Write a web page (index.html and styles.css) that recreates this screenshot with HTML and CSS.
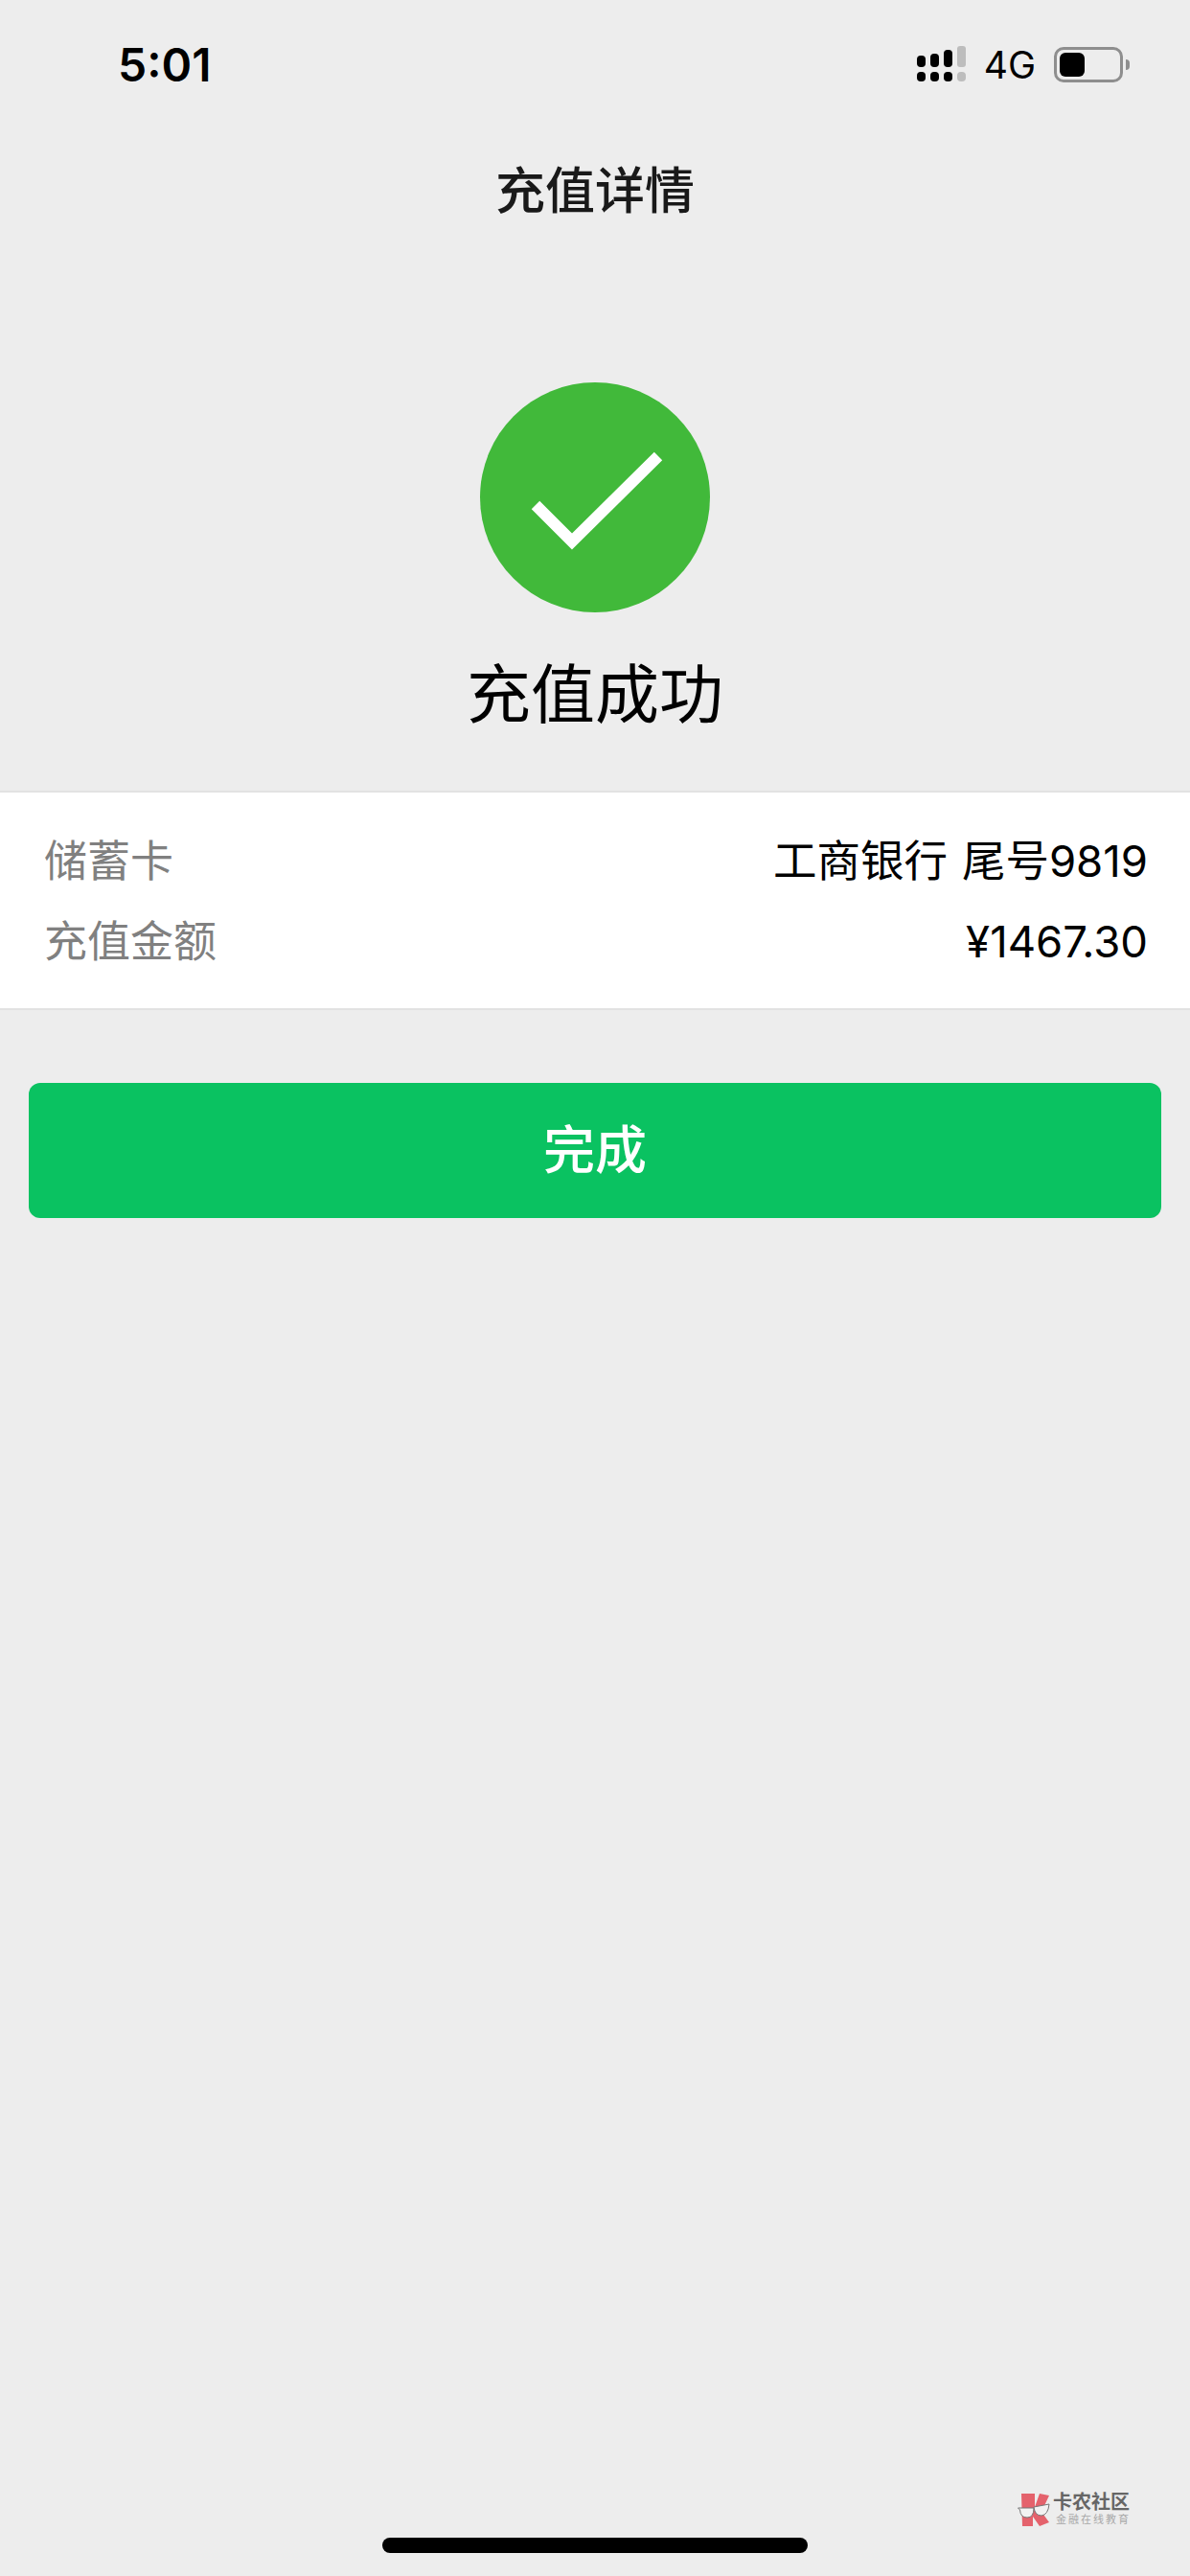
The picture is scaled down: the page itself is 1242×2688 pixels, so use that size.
FILE: index.html
```html
<html lang="zh-CN">
<head>
    <meta charset="UTF-8">
    <title>充值详情</title>
    <link rel="stylesheet" href="styles.css">
</head>
<body>

<div class="statusbar">
    <span class="time">5:01</span>
    <div class="status-icons">
        <svg class="signal" width="52" height="38" viewBox="0 0 52 38">
            <rect x="0" y="10" width="9" height="12" rx="4" fill="#000000"/>
            <rect x="14" y="8" width="9" height="14" rx="4" fill="#000000"/>
            <rect x="28" y="4" width="9" height="18" rx="4" fill="#000000"/>
            <rect x="42" y="0" width="9" height="22" rx="3" fill="#BDBDBD"/>
            <rect x="0" y="27" width="9" height="10" rx="4" fill="#000000"/>
            <rect x="14" y="27" width="9" height="10" rx="4" fill="#000000"/>
            <rect x="28" y="27" width="9" height="10" rx="4" fill="#000000"/>
            <rect x="42" y="27" width="9" height="10" rx="4" fill="#BDBDBD"/>
        </svg>
        <span class="network">4G</span>
        <div class="battery">
            <div class="battery-level"></div>
        </div>
        <div class="battery-nub"></div>
    </div>
</div>

<h1 class="navtitle">充值详情</h1>

<svg class="success-icon" width="240" height="240" viewBox="0 0 240 240">
    <circle cx="120" cy="120" r="120" fill="#41B93A"/>
    <path d="M58 128 L96 166 L186 77" fill="none" stroke="#FFFFFF" stroke-width="12"/>
</svg>

<h2 class="result">充值成功</h2>

<div class="details">
    <div class="row">
        <span class="label">储蓄卡</span>
        <span class="value">工商银行 尾号9819</span>
    </div>
    <div class="row">
        <span class="label">充值金额</span>
        <span class="value">¥1467.30</span>
    </div>
</div>

<a class="done" href="#">完成</a>

<div class="watermark">
    <svg class="watermark-logo" width="34" height="35" viewBox="0 0 34 35">
        <path d="M4 0 H18 V14 L23 0 L33 2 L25 19 L33 30 L23 34 L16 24 V34 H5 Z" fill="#E4626C"/>
        <path d="M0.5 15 L17 15 Q17 25 10 25 Q3 25 2.5 17 Z" fill="#F2F2F2" stroke="#777777"/>
        <path d="M17 14 L33 11 Q32 22 25 23 Q18 23 17 14 Z" fill="#F2F2F2" stroke="#777777"/>
    </svg>
    <div>
        <div class="watermark-name">卡农社区</div>
        <div class="watermark-sub">金融在线教育</div>
    </div>
</div>

<div class="homebar"></div>

</body>
</html>
```

FILE: styles.css
```css
body {
    font-family: "Inter", "Noto Sans CJK SC", sans-serif;
    background-color: #EDEDED;
    color: #000000;
    margin: 0;
    width: 1242px;
    height: 2688px;
    position: relative;
    overflow: hidden;
}

.statusbar {
    height: 134px;
    display: flex;
    align-items: center;
    justify-content: space-between;
    padding: 0 63px 0 123px;
}

.time {
    font-size: 48px;
    font-weight: 600;
}

.status-icons {
    display: flex;
    align-items: center;
}

.signal {
    margin-right: 18px;
}

.network {
    font-size: 39px;
    margin-right: 19px;
}

.battery {
    box-sizing: border-box;
    width: 72px;
    height: 37px;
    border: 3px solid #8E8E8E;
    border-radius: 10px;
    padding: 3px;
}

.battery-level {
    width: 26px;
    height: 25px;
    background-color: #000000;
    border-radius: 6px;
}

.battery-nub {
    width: 4px;
    height: 11px;
    margin-left: 3px;
    background-color: #8E8E8E;
    border-radius: 0 4px 4px 0;
}

.navtitle {
    height: 130px;
    line-height: 132px;
    margin: 0;
    text-align: center;
    font-size: 52px;
    font-weight: 500;
    color: #191919;
}

.success-icon {
    display: block;
    margin: 135px auto 0;
}

.result {
    height: 90px;
    line-height: 90px;
    margin: 41px 0 55px;
    text-align: center;
    font-size: 67px;
    font-weight: 400;
}

.details {
    box-sizing: border-box;
    height: 229px;
    padding: 30px 44px 0 46px;
    background-color: #FFFFFF;
    border-top: 2px solid #E2E2E2;
    border-bottom: 2px solid #E2E2E2;
}

.row {
    display: flex;
    justify-content: space-between;
    height: 84px;
    line-height: 84px;
    font-size: 45px;
}

.label {
    color: #808080;
}

.value {
    font-size: 45.5px;
    word-spacing: 2px;
}

.done {
    display: block;
    height: 141px;
    line-height: 141px;
    margin: 76px 30px 0;
    background-color: #0AC261;
    border-radius: 12px;
    color: #FFFFFF;
    text-align: center;
    text-decoration: none;
    font-size: 54px;
    font-weight: 500;
}

.watermark {
    position: absolute;
    left: 1062px;
    top: 2600px;
    display: flex;
    gap: 3px;
}

.watermark-logo {
    margin-top: 2px;
}

.watermark-name {
    font-size: 20px;
    line-height: 22px;
    font-weight: 700;
    color: #666666;
    white-space: nowrap;
}

.watermark-sub {
    font-size: 11px;
    line-height: 14px;
    letter-spacing: 2px;
    margin-left: 3px;
    color: #A8A8A8;
    white-space: nowrap;
}

.homebar {
    position: absolute;
    left: 399px;
    top: 2648px;
    width: 444px;
    height: 16px;
    background-color: #000000;
    border-radius: 8px;
}
```
